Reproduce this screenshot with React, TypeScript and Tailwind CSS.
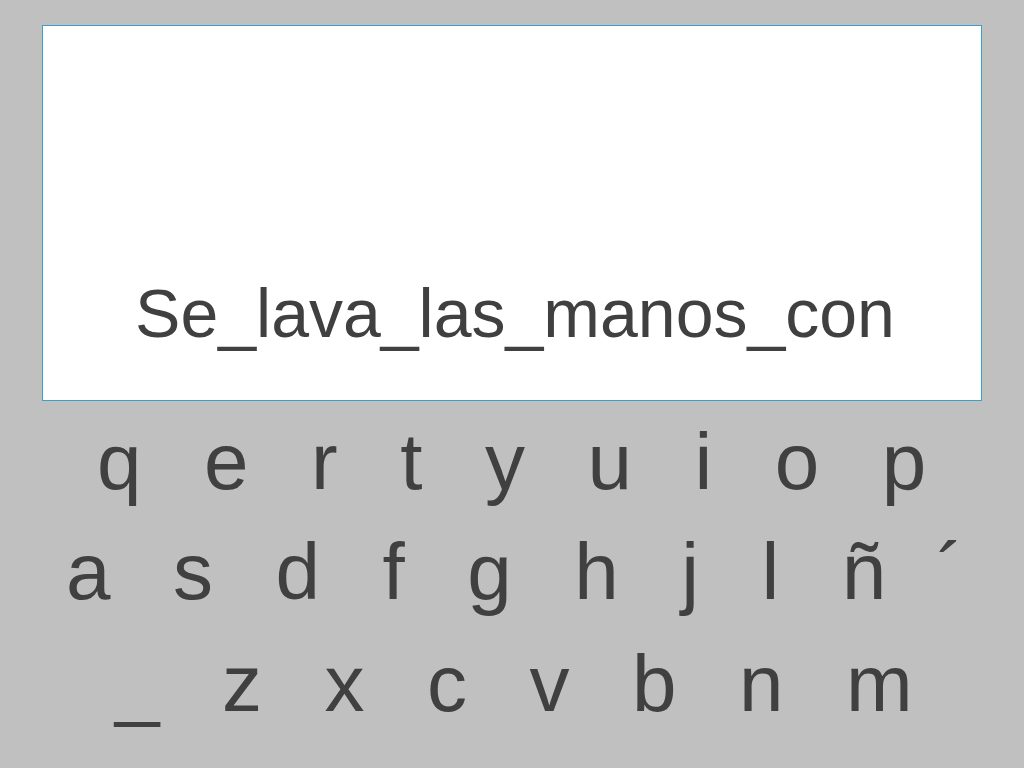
const rows = [
  { keys: ["q", "e", "r", "t", "y", "u", "i", "o", "p"], pad: "pl-[97px]", extra: "" },
  { keys: ["a", "s", "d", "f", "g", "h", "j", "l", "ñ", "´"], pad: "pl-[66px]", extra: "" },
  { keys: ["_", "z", "x", "c", "v", "b", "n", "m"], pad: "pl-[115px]", extra: "mt-[2px]" },
];

export default function App() {
  return (
    <div
      className="h-[768px] w-[1024px] overflow-hidden bg-[#c0c0c0] text-[#404040]"
      style={{ fontFamily: '"Liberation Sans", Arial, sans-serif' }}
    >
      <div className="pl-[42px] pt-[25px]">
        <div className="flex h-[376px] w-[940px] flex-col justify-end border border-[#3a9fc9] bg-white pb-[53px]">
          <p className="pl-[6px] text-center text-[68px] leading-none">Se_lava_las_manos_con</p>
        </div>
      </div>

      <div className="mt-[6px] flex flex-col">
        {rows.map((row, i) => (
          <div key={i} className={`flex gap-[62.5px] text-[80px] leading-[110px] ${row.pad} ${row.extra}`}>
            {row.keys.map((k) => (
              <span key={k} className={k === "´" ? "-ml-[12px]" : ""}>
                {k}
              </span>
            ))}
          </div>
        ))}
      </div>
    </div>
  );
}
